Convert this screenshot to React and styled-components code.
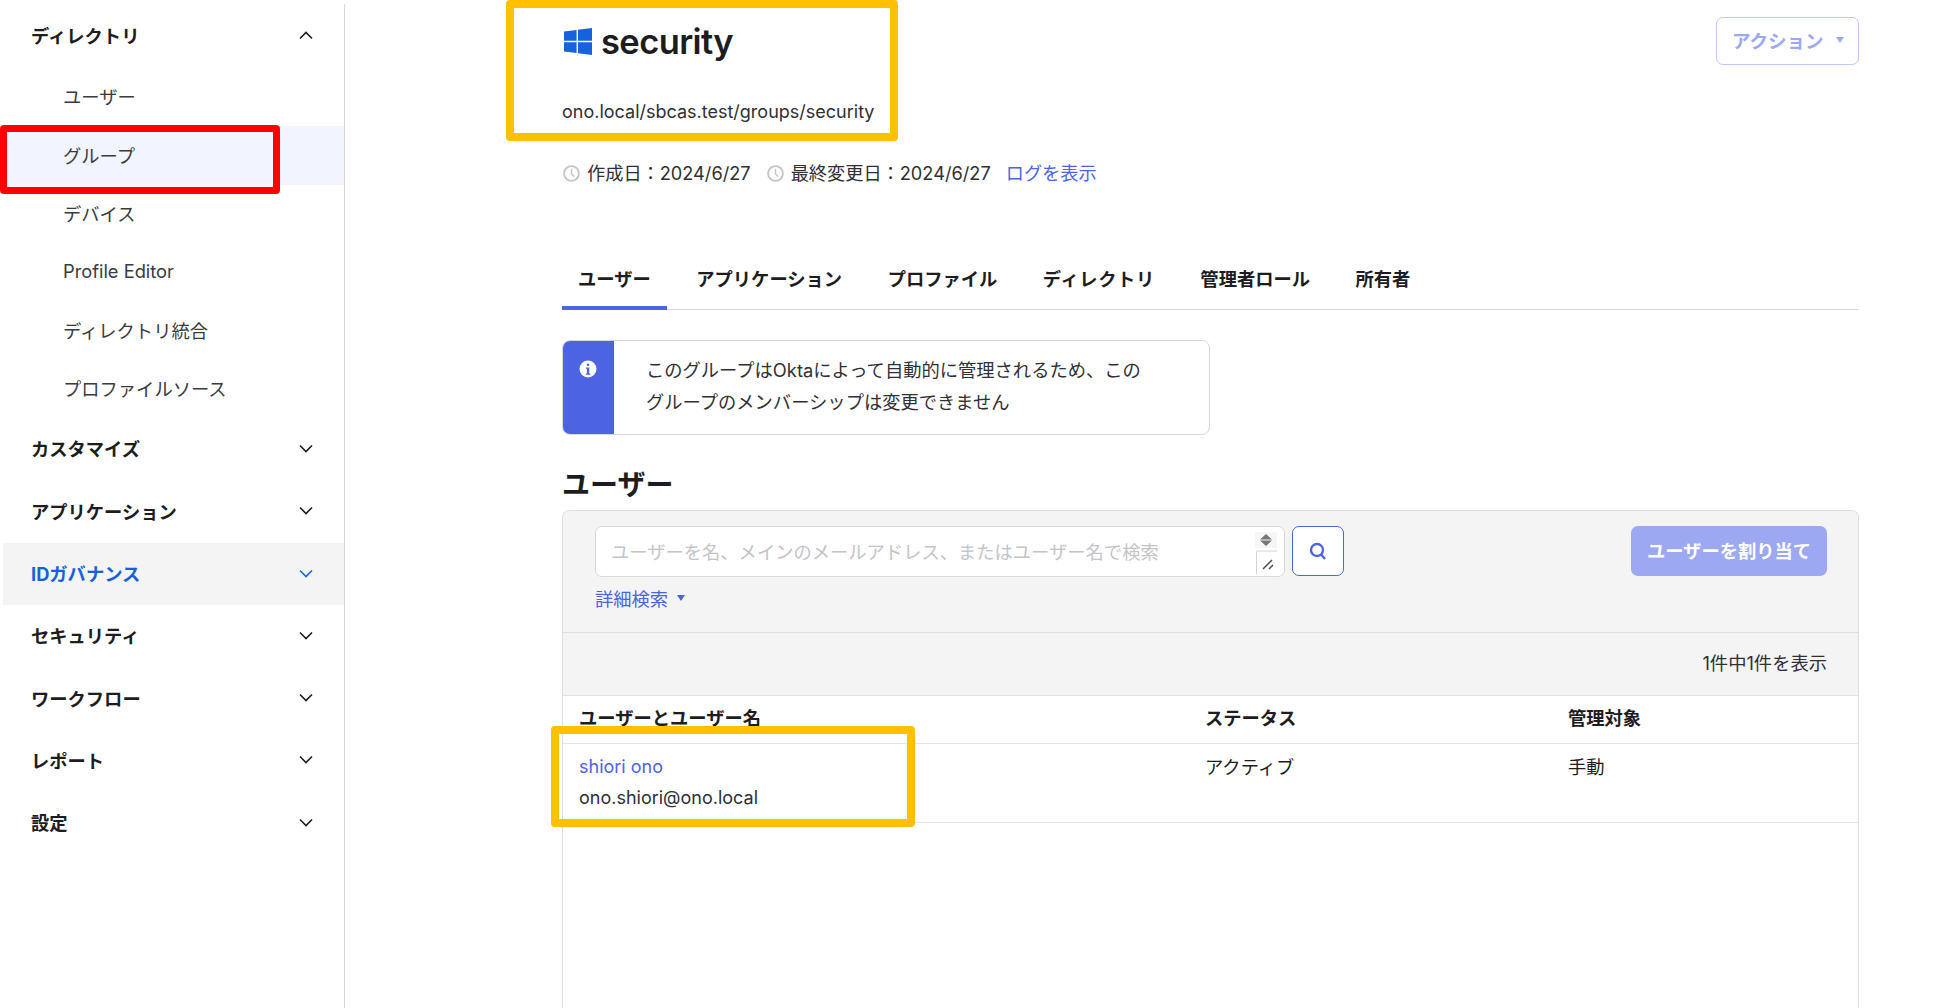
import React from "react";
import styled, { createGlobalStyle } from "styled-components";

const FONT = `Inter, "Noto Sans CJK JP", sans-serif`;
const INK = "#1d1d21";
const LINK = "#4c64e2";

const GlobalStyle = createGlobalStyle`
  html, body {
    margin: 0;
    padding: 0;
    background: #fff;
  }
  body {
    font-family: ${FONT};
    font-size: 18.3px;
    color: ${INK};
  }
  * {
    box-sizing: border-box;
  }
`;

const Page = styled.div`
  position: relative;
  display: flex;
  width: 1952px;
  height: 1008px;
  overflow: hidden;
`;

const Sidebar = styled.nav`
  flex: none;
  width: 345px;
  margin-top: 4px;
  padding-left: 3px;
  border-right: 1px solid #d7d7dc;
`;

const SectionRow = styled.div`
  display: flex;
  align-items: center;
  justify-content: space-between;
  height: ${(p) => (p.$first ? "64px" : "62.3px")};
  padding: 0 31px 2px 28px;
  font-weight: 700;
  color: ${(p) => (p.$active ? "#1662dd" : INK)};
  background: ${(p) => (p.$active ? "#f4f4f4" : "transparent")};
`;

const SubRow = styled.div`
  display: flex;
  align-items: center;
  height: 58.4px;
  margin-left: -3px;
  padding: 0 0 2px 63px;
  color: #3a3a40;
  background: ${(p) => (p.$active ? "#f2f4ff" : "transparent")};
`;

const Main = styled.main`
  flex: 1;
  display: flex;
  flex-direction: column;
  min-width: 0;
  padding: 0 93px 0 217px;
`;

const Header = styled.header`
  display: flex;
  justify-content: space-between;
  align-items: flex-start;
`;

const TitleRow = styled.div`
  display: flex;
  align-items: center;
  gap: 9px;
  height: 40px;
  margin: 21px 0 0 2px;
`;

const Title = styled.h1`
  margin: 0;
  font-size: 34.5px;
  font-weight: 600;
  letter-spacing: -0.6px;
  color: #1d1d21;
`;

const GroupPath = styled.div`
  margin-top: 39px;
  line-height: 24px;
  font-size: 18px;
  color: #2f2f36;
`;

const ActionButton = styled.button`
  display: flex;
  align-items: center;
  justify-content: space-between;
  width: 143px;
  height: 48px;
  margin-top: 17px;
  padding: 0 14px 2px 15px;
  border: 1.5px solid #c0c9fb;
  border-radius: 7px;
  background: #fff;
  font: 700 18.5px ${FONT};
  color: #9da8f3;
`;

const Caret = styled.span`
  width: 0;
  height: 0;
  border-left: 4px solid transparent;
  border-right: 4px solid transparent;
  border-top: 6px solid ${(p) => p.$color};
  margin-left: ${(p) => p.$gap || 0}px;
`;

const Meta = styled.div`
  display: flex;
  align-items: center;
  height: 24px;
  margin-top: 36px;
  font-size: 18.2px;
  color: #2f2f36;
`;

const MetaDate = styled.span`
  display: flex;
  align-items: center;
  margin-right: 15px;
  & > svg {
    margin: 2px 7px 0 1px;
  }
`;

const LogLink = styled.a`
  color: ${LINK};
`;

const Tabs = styled.div`
  display: flex;
  gap: 13.5px;
  height: 49px;
  margin-top: 77px;
  border-bottom: 1px solid #d7d7dc;
`;

const Tab = styled.div`
  height: 49px;
  padding: 6px 16px 0;
  line-height: 24px;
  font-weight: 700;
  letter-spacing: ${(p) => p.$spacing || 0}px;
  border-bottom: 4px solid ${(p) => (p.$active ? LINK : "transparent")};
`;

const Alert = styled.div`
  display: flex;
  width: 648px;
  height: 95px;
  margin-top: 30px;
  border: 1px solid #d7d7dc;
  border-radius: 8px;
  overflow: hidden;
`;

const AlertStripe = styled.div`
  flex: none;
  display: flex;
  justify-content: center;
  width: 52px;
  margin: -1px 0 -1px -1px;
  padding-top: 20px;
  background: ${LINK};
`;

const AlertText = styled.div`
  padding: 14px 0 0 32px;
  line-height: 31.5px;
  color: #2f2f36;
`;

const SectionTitle = styled.h2`
  margin: 32px 0 0;
  font-size: 28px;
  line-height: 36px;
  font-weight: 700;
`;

const Panel = styled.section`
  flex: 1;
  margin-top: 7px;
  border: 1px solid #dedee2;
  border-bottom: none;
  border-radius: 8px 8px 0 0;
  overflow: hidden;
`;

const Toolbar = styled.div`
  display: flex;
  justify-content: space-between;
  height: 122px;
  padding: 15px 31px 0 32px;
  background: #f4f4f4;
  border-bottom: 1px solid #dedee2;
`;

const SearchArea = styled.div`
  display: flex;
  flex-direction: column;
`;

const SearchRow = styled.div`
  display: flex;
  gap: 7px;
`;

const SearchInput = styled.div`
  position: relative;
  display: flex;
  align-items: center;
  width: 690px;
  height: 51px;
  padding: 0 0 2px 15px;
  background: #fff;
  border: 1.5px solid #d8d8dc;
  border-radius: 7px;
  color: #c4c4c8;
`;

const InputControls = styled.svg`
  position: absolute;
  right: 6px;
  top: 5px;
`;

const SearchButton = styled.button`
  display: flex;
  align-items: center;
  justify-content: center;
  width: 52px;
  height: 50px;
  padding: 0;
  background: #fff;
  border: 1.5px solid ${LINK};
  border-radius: 7px;
`;

const AdvancedLink = styled.a`
  display: flex;
  align-items: center;
  height: 24px;
  margin-top: 9px;
  color: ${LINK};
`;

const AssignButton = styled.button`
  width: 196px;
  height: 50px;
  padding: 0 0 3px;
  border: none;
  border-radius: 7px;
  background: #9ca8f1;
  font: 700 18.3px ${FONT};
  color: #fff;
`;

const CountRow = styled.div`
  display: flex;
  align-items: center;
  justify-content: flex-end;
  height: 63px;
  padding: 0 31px 4px 0;
  background: #f4f4f4;
  border-bottom: 1px solid #e1e1e5;
  color: #2f2f36;
`;

const TableRow = styled.div`
  display: grid;
  grid-template-columns: 626px 363px 1fr;
  height: ${(p) => p.$height}px;
  padding: ${(p) => p.$pad}px 0 0 16px;
  border-bottom: 1px solid #e6e6ea;
  line-height: 24px;
  font-weight: ${(p) => (p.$head ? 700 : 400)};
`;

const UserName = styled.a`
  display: block;
  font-size: 18px;
  color: ${LINK};
`;

const UserMail = styled.div`
  margin-top: 7px;
  font-size: 18px;
  color: #2f2f36;
`;

const Callout = styled.div`
  position: absolute;
  left: ${(p) => p.$x}px;
  top: ${(p) => p.$y}px;
  width: ${(p) => p.$w}px;
  height: ${(p) => p.$h}px;
  border: ${(p) => (p.$red ? "7px solid #ff0000" : "8.5px solid #ffc000")};
  border-radius: 4px;
  pointer-events: none;
`;

const Chevron = ({ up, color = "#1d1d21" }) => (
  <svg width="14" height="9" viewBox="0 0 14 9" fill="none">
    <path
      d={up ? "M1 7.5 7 1.5l6 6" : "M1 1.5l6 6 6-6"}
      stroke={color}
      strokeWidth="1.6"
    />
  </svg>
);

const WindowsLogo = () => (
  <svg width="28" height="27" viewBox="0 0 28 27">
    <path
      fill="#1662dd"
      d="M0 3.6 12.6 2v10.8H0zM14 1.8 28 0v12.8H14zM0 14.2h12.6V25L0 23.4zM14 14.2h14V27l-14-1.8z"
    />
  </svg>
);

const ClockIcon = () => (
  <svg width="17" height="17" viewBox="0 0 17 17" fill="none" stroke="#c6c6ca" strokeWidth="1.9">
    <circle cx="8.5" cy="8.5" r="7.4" />
    <path d="M8.5 3.8V9l2.8 2.6" strokeWidth="1.5" />
  </svg>
);

const InfoIcon = () => (
  <svg width="18" height="18" viewBox="0 0 18 18">
    <circle cx="9" cy="9" r="8.5" fill="#fff" />
    <rect x="7.7" y="3.4" width="2.6" height="2.6" rx="1.3" fill={LINK} />
    <path d="M6.9 7.4h3.3v6h1.1v1.3H6.8v-1.3h1.1V8.7h-1z" fill={LINK} />
  </svg>
);

const SearchIcon = () => (
  <svg width="18" height="19" viewBox="0 0 18 19" fill="none" stroke={LINK} strokeWidth="2.4">
    <circle cx="8" cy="8" r="6" />
    <path d="M12 12.5 16 17" />
  </svg>
);

const SECTIONS = ["カスタマイズ", "アプリケーション", "IDガバナンス", "セキュリティ", "ワークフロー", "レポート", "設定"];
const SUB_ITEMS = ["ユーザー", "グループ", "デバイス", "Profile Editor", "ディレクトリ統合", "プロファイルソース"];
const TABS = ["ユーザー", "アプリケーション", "プロファイル", "ディレクトリ", "管理者ロール", "所有者"];

export default function App() {
  return (
    <Page>
      <GlobalStyle />
      <Sidebar>
        <SectionRow $first>
          ディレクトリ
          <Chevron up />
        </SectionRow>
        {SUB_ITEMS.map((item) => (
          <SubRow key={item} $active={item === "グループ"}>
            {item}
          </SubRow>
        ))}
        {SECTIONS.map((item) => {
          const active = item === "IDガバナンス";
          return (
            <SectionRow key={item} $active={active}>
              {item}
              <Chevron color={active ? "#1662dd" : "#1d1d21"} />
            </SectionRow>
          );
        })}
      </Sidebar>

      <Main>
        <Header>
          <div>
            <TitleRow>
              <WindowsLogo />
              <Title>security</Title>
            </TitleRow>
            <GroupPath>ono.local/sbcas.test/groups/security</GroupPath>
          </div>
          <ActionButton>
            アクション
            <Caret $color="#9da8f3" />
          </ActionButton>
        </Header>

        <Meta>
          <MetaDate>
            <ClockIcon />
            作成日：2024/6/27
          </MetaDate>
          <MetaDate>
            <ClockIcon />
            最終変更日：2024/6/27
          </MetaDate>
          <LogLink>ログを表示</LogLink>
        </Meta>

        <Tabs>
          {TABS.map((tab, i) => (
            <Tab key={tab} $active={i === 0} $spacing={tab === "ディレクトリ" ? 0.6 : 0}>
              {tab}
            </Tab>
          ))}
        </Tabs>

        <Alert>
          <AlertStripe>
            <InfoIcon />
          </AlertStripe>
          <AlertText>
            このグループはOktaによって自動的に管理されるため、この
            <br />
            グループのメンバーシップは変更できません
          </AlertText>
        </Alert>

        <SectionTitle>ユーザー</SectionTitle>

        <Panel>
          <Toolbar>
            <SearchArea>
              <SearchRow>
                <SearchInput>
                  ユーザーを名、メインのメールアドレス、またはユーザー名で検索
                  <InputControls width="24" height="42" viewBox="0 0 24 42" fill="none">
                    <rect x="1" y="0" width="22" height="16" fill="#f6f6f6" />
                    <path d="M12 2 18 7.5H6zM12 14 6 8.5h12z" fill="#77777c" />
                    <path d="M2.5 42V19H23" stroke="#d4d4d8" />
                    <path d="M9 37 18 28M15 37l4-4" stroke="#4a4a50" strokeWidth="1.5" />
                  </InputControls>
                </SearchInput>
                <SearchButton>
                  <SearchIcon />
                </SearchButton>
              </SearchRow>
              <AdvancedLink>
                詳細検索
                <Caret $color={LINK} $gap={9} />
              </AdvancedLink>
            </SearchArea>
            <AssignButton>ユーザーを割り当て</AssignButton>
          </Toolbar>
          <CountRow>1件中1件を表示</CountRow>
          <TableRow $head $height={48} $pad={10}>
            <div>ユーザーとユーザー名</div>
            <div>ステータス</div>
            <div>管理対象</div>
          </TableRow>
          <TableRow $height={79} $pad={11}>
            <div>
              <UserName>shiori ono</UserName>
              <UserMail>ono.shiori@ono.local</UserMail>
            </div>
            <div>アクティブ</div>
            <div>手動</div>
          </TableRow>
        </Panel>
      </Main>

      <Callout $red $x={0} $y={125} $w={280} $h={69} />
      <Callout $x={506} $y={0} $w={392} $h={141} />
      <Callout $x={551} $y={726} $w={364} $h={101} />
    </Page>
  );
}
